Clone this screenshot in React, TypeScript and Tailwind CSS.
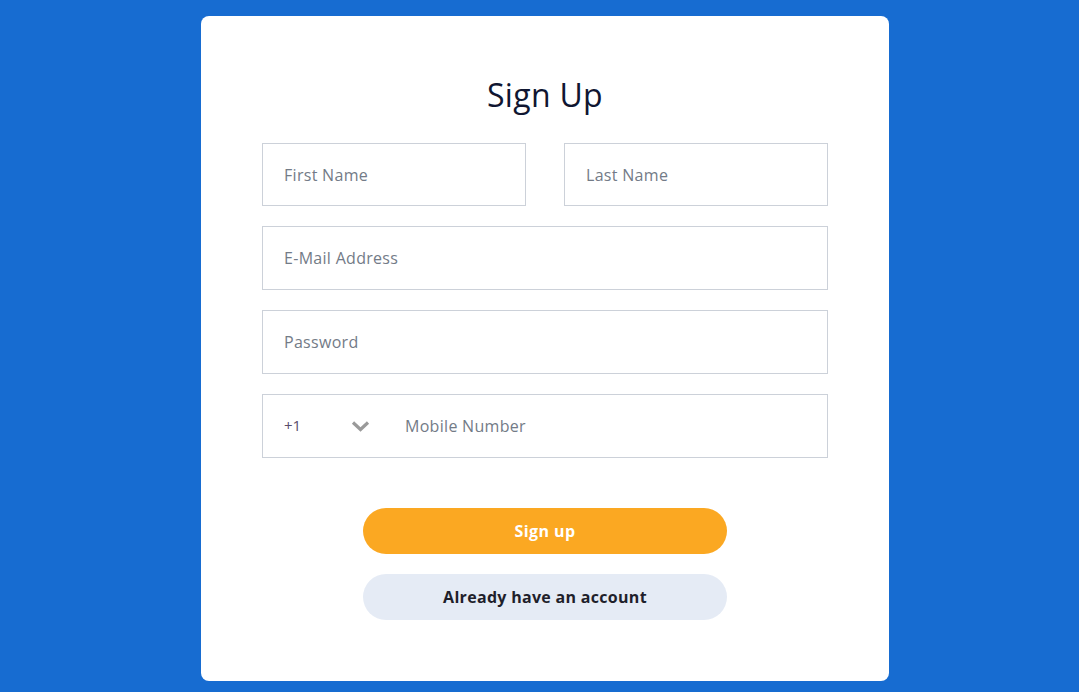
export default function App() {
  const font = { fontFamily: '"Open Sans", "Noto Sans", sans-serif' };
  const field =
    "h-[64px] w-full border border-[#ccd1d9] px-[21px] text-[16px] tracking-[0.3px] text-[#333] placeholder:text-[#737b87] outline-none";
  return (
    <div className="min-h-screen w-full bg-[#176cd1] pt-4" style={font}>
      <div className="ml-[201px] w-[688px] h-[665px] rounded-lg bg-white px-[61px] pt-[59px]">
        <h1 className="text-center text-[32px] leading-[40px] tracking-[0.3px] text-[#101631]">Sign Up</h1>

        <div className="mt-[28px] flex flex-col gap-5">
          <div className="flex gap-[38px]">
            <input
              className="h-[63px] w-[264px] border border-[#ccd1d9] px-[21px] text-[16px] tracking-[0.3px] text-[#333] placeholder:text-[#737b87] outline-none"
              placeholder="First Name"
            />
            <input
              className="h-[63px] w-[264px] border border-[#ccd1d9] px-[21px] text-[16px] tracking-[0.3px] text-[#333] placeholder:text-[#737b87] outline-none"
              placeholder="Last Name"
            />
          </div>
          <input className={field} placeholder="E-Mail Address" />
          <input type="password" className={field} placeholder="Password" />
          <div className="flex h-[64px] w-full items-center border border-[#ccd1d9]">
            <div className="flex w-[142px] items-center pl-[21px] pr-[35px] -mt-[2px]">
              <span className="text-[15px] text-[#5a4d6b]">+1</span>
              <svg className="ml-auto mt-[2px]" width="19" height="12" viewBox="0 0 19 12">
                <path d="M2 2.5 L9.5 9.5 L17 2.5" fill="none" stroke="#9a9a9a" strokeWidth="3.2" />
              </svg>
            </div>
            <input
              className="h-full flex-1 text-[16px] tracking-[0.3px] text-[#333] placeholder:text-[#737b87] outline-none"
              placeholder="Mobile Number"
            />
          </div>
        </div>

        <div className="mt-[50px] flex flex-col items-center gap-5">
          <button className="h-[46px] w-[364px] rounded-full bg-[#fba822] text-[16px] font-bold tracking-[0.4px] text-white">
            Sign up
          </button>
          <button className="h-[46px] w-[364px] rounded-full bg-[#e5ebf5] text-[16px] font-bold tracking-[0.3px] text-[#1f1f2b]">
            Already have an account
          </button>
        </div>
      </div>
    </div>
  );
}
